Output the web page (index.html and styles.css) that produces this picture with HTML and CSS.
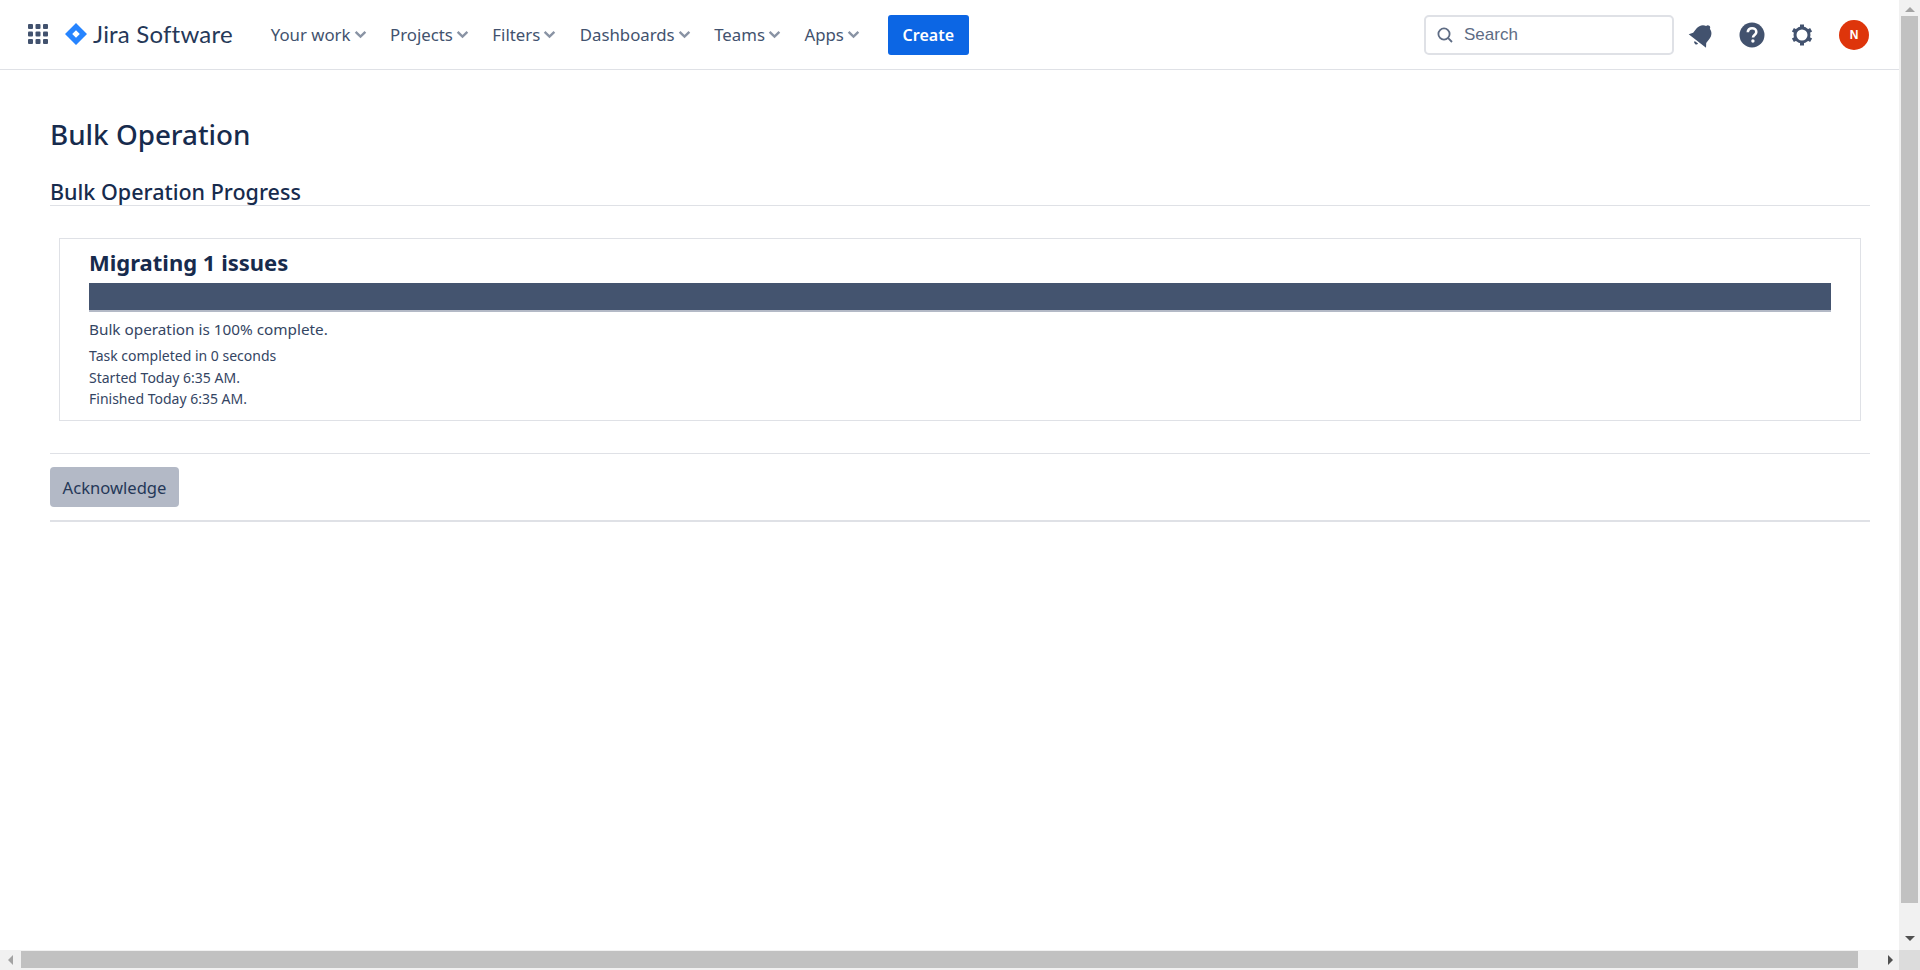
FILE: index.html
```html
<!DOCTYPE html>
<html lang="en">
<head>
<meta charset="utf-8">
<title>Bulk Operation</title>
<link rel="stylesheet" href="styles.css">
</head>
<body>
<div class="shell">
  <div class="viewport">
    <header class="topbar">
      <svg class="apps" width="22" height="22" viewBox="0 0 22 22" fill="#42526e">
        <rect x="1" y="1" width="5" height="5" rx="1"/><rect x="8.5" y="1" width="5" height="5" rx="1"/><rect x="16" y="1" width="5" height="5" rx="1"/>
        <rect x="1" y="8.5" width="5" height="5" rx="1"/><rect x="8.5" y="8.5" width="5" height="5" rx="1"/><rect x="16" y="8.5" width="5" height="5" rx="1"/>
        <rect x="1" y="16" width="5" height="5" rx="1"/><rect x="8.5" y="16" width="5" height="5" rx="1"/><rect x="16" y="16" width="5" height="5" rx="1"/>
      </svg>
      <svg class="logo-mark" width="22" height="22" viewBox="0 0 22 22">
        <path fill="#2684ff" d="M11 0 L22 11 L11 22 L0 11 Z M11 7.2 L7.2 11 L11 14.8 L14.8 11 Z" fill-rule="evenodd"/>
      </svg>
      <span class="logo-text">Jira Software</span>
      <nav class="nav">
        <a class="nav-item">Your work<svg class="chev" viewBox="0 0 12 8"><path d="M1.5 1.5 L6 6 L10.5 1.5"/></svg></a>
        <a class="nav-item">Projects<svg class="chev" viewBox="0 0 12 8"><path d="M1.5 1.5 L6 6 L10.5 1.5"/></svg></a>
        <a class="nav-item">Filters<svg class="chev" viewBox="0 0 12 8"><path d="M1.5 1.5 L6 6 L10.5 1.5"/></svg></a>
        <a class="nav-item">Dashboards<svg class="chev" viewBox="0 0 12 8"><path d="M1.5 1.5 L6 6 L10.5 1.5"/></svg></a>
        <a class="nav-item">Teams<svg class="chev" viewBox="0 0 12 8"><path d="M1.5 1.5 L6 6 L10.5 1.5"/></svg></a>
        <a class="nav-item">Apps<svg class="chev" viewBox="0 0 12 8"><path d="M1.5 1.5 L6 6 L10.5 1.5"/></svg></a>
      </nav>
      <button class="create">Create</button>
      <div class="search">
        <svg width="18" height="18" viewBox="0 0 18 18" fill="none" stroke="#5e6c84" stroke-width="1.8"><circle cx="8" cy="8" r="5.6"/><path d="M12.2 12.2 L16 16"/></svg>
        <span>Search</span>
      </div>
      <svg class="tool bell" width="28" height="28" viewBox="0 0 26 26" fill="#42526e">
        <g transform="rotate(38 13 13)"><path d="M13 2c1 0 2 .6 2.200 2c3.500 .9 5.500 4 5.500 7.500v5l2.500 3.500H2.800l2.500-3.500v-5c0-3.500 2-6.600 5.500-7.500c.2-1.400 1.200-2 2.200-2z"/><path d="M11 21.500h4a2 2 0 0 1-4 0z"/></g>
      </svg>
      <svg class="tool help" width="26" height="26" viewBox="0 0 26 26">
        <circle cx="13" cy="13" r="12.5" fill="#42526e"/>
        <path d="M8.8 10.3c0-2.5 1.9-4.1 4.3-4.1s4.2 1.5 4.2 3.7c0 3-3.3 3.1-3.3 5.6" fill="none" stroke="#fff" stroke-width="2.6"/>
        <circle cx="13.9" cy="19" r="1.7" fill="#fff"/>
      </svg>
      <svg class="tool gear" width="24" height="24" viewBox="0 0 24 24" fill="none" stroke="#42526e">
        <circle cx="12" cy="12" r="7" stroke-width="3"/>
        <path stroke-width="4" d="M12 1.500v3M12 19.500v3M2.900 6.800l2.600 1.500M18.500 15.700l2.600 1.500M2.900 17.200l2.600-1.500M18.500 8.300l2.600-1.500"/>
      </svg>
      <span class="avatar">N</span>
    </header>
    <main class="page">
      <h1 class="title">Bulk Operation</h1>
      <h2 class="subtitle">Bulk Operation Progress</h2>
      <section class="panel">
        <h3 class="panel-title">Migrating 1 issues</h3>
        <div class="bar"></div>
        <p class="status">Bulk operation is 100% complete.</p>
        <p class="detail">Task completed in 0 seconds</p>
        <p class="detail">Started Today 6:35 AM.</p>
        <p class="detail">Finished Today 6:35 AM.</p>
      </section>
      <div class="actions">
        <button class="ack">Acknowledge</button>
      </div>
    </main>
  </div>
  <div class="vscroll">
    <span class="arrow arrow-up"></span>
    <div class="vtrack"><div class="vthumb"></div></div>
    <span class="arrow arrow-down"></span>
  </div>
  <div class="hscroll">
    <span class="arrow arrow-left"></span>
    <div class="htrack"><div class="hthumb"></div></div>
    <span class="arrow arrow-right"></span>
  </div>
  <div class="corner"></div>
</div>
</body>
</html>
```
FILE: styles.css
```css
* { box-sizing: border-box; }
html, body { margin: 0; height: 100%; overflow: hidden; background: #fff; }
body { font-family: "Noto Sans", "Open Sans", sans-serif; color: #172b4d; }
.shell {
  display: grid;
  grid-template-columns: 1899px 21px;
  grid-template-rows: 950px 20px;
  width: 1920px;
  height: 970px;
}
.viewport { overflow: hidden; background: #fff; }

.topbar {
  display: flex;
  align-items: center;
  height: 70px;
  padding: 0 0 0 27px;
  border-bottom: 1px solid #dfe1e6;
}
.apps { flex: none; margin-bottom: 2px; }
.logo-mark { flex: none; margin-left: 16px; margin-bottom: 2px; }
.logo-text {
  margin-left: 6px;
  margin-bottom: 2px;
  font-family: Lato, sans-serif;
  font-size: 24px;
  letter-spacing: 0.2px;
  color: #253858;
}
.nav { display: flex; align-items: center; margin-left: 38px; gap: 23.5px; }
.nav-item {
  display: flex;
  align-items: center;
  gap: 3px;
  font-size: 16.8px;
  color: #42526e;
}
.chev { width: 13px; height: 9px; fill: none; stroke: #8993a4; stroke-width: 2.2; }
.create {
  width: 81px;
  height: 40px;
  margin-left: 28px;
  padding: 0;
  border: 0;
  border-radius: 3px;
  background: #0c66e4;
  color: #fff;
  font: 600 16px "Noto Sans", sans-serif;
}
.search {
  display: flex;
  align-items: center;
  gap: 10px;
  width: 250px;
  height: 40px;
  margin-left: auto;
  padding-left: 10px;
  border: 2px solid #dfe1e6;
  border-radius: 5px;
  font: 17px "Liberation Sans", sans-serif;
  color: #5e6c84;
}
.tool { flex: none; }
.bell { margin-left: 14px; }
.help { margin-left: 23px; }
.gear { margin-left: 25px; }
.avatar {
  flex: none;
  display: flex;
  align-items: center;
  justify-content: center;
  width: 30px;
  height: 30px;
  margin: 0 30px 0 25px;
  border-radius: 50%;
  background: #de350b;
  color: #fff;
  font: 700 12px "Liberation Sans", sans-serif;
}

.page { padding: 0 29px 0 50px; }
.title {
  margin: 0;
  padding-top: 44px;
  font-size: 27.8px;
  line-height: 40px;
  font-weight: 500;
  color: #172b4d;
}
.subtitle {
  margin: 16px 0 0;
  height: 36px;
  border-bottom: 1px solid #dfe1e6;
  font-size: 21.5px;
  line-height: 44px;
  font-weight: 500;
}
.panel {
  margin: 32px 9px 0;
  height: 183px;
  padding: 7px 29px 0;
  border: 1px solid #dfe1e6;
}
.panel-title {
  margin: 0;
  font-size: 22px;
  line-height: 32px;
  font-weight: 700;
}
.bar {
  height: 29px;
  margin-top: 5px;
  background: #44546f;
  border-bottom: 2px solid #b3b9c6;
}
.status { margin: 7px 0 5px; font-size: 15.3px; line-height: 21px; color: #344563; }
.detail { margin: 0; font-size: 14px; line-height: 21.5px; color: #344563; }
.actions {
  margin-top: 32px;
  padding: 13px 0 13px;
  border-top: 1px solid #dfe1e6;
  border-bottom: 2px solid #dfe1e6;
}
.ack {
  display: block;
  width: 129px;
  height: 40px;
  padding: 0;
  border: 0;
  border-radius: 4px;
  background: #b3b9c6;
  color: #253858;
  font: 16.6px "Noto Sans", sans-serif;
}

.vscroll {
  display: flex;
  flex-direction: column;
  align-items: center;
  background: #f1f1f1;
}
.vtrack { flex: 1; width: 100%; padding-left: 2px; padding-right: 2px; }
.vthumb { height: 887px; background: #c1c1c1; }
.hscroll {
  display: flex;
  align-items: center;
  background: #f1f1f1;
}
.htrack { flex: 1; height: 100%; padding: 1px 0 2px; }
.hthumb { width: 1837px; height: 100%; background: #c1c1c1; }
.corner { background: #dcdcdc; }
.arrow { flex: none; display: block; width: 0; height: 0; border-style: solid; border-color: transparent; }
.arrow-up { margin: 7px 0 4px; border-width: 0 5px 5px; border-bottom-color: #a3a3a3; }
.arrow-down { margin: 4px 0 9px; border-width: 5px 5px 0; border-top-color: #505050; }
.arrow-left { margin: 0 8px 0 8px; border-width: 5px 5px 5px 0; border-right-color: #a3a3a3; }
.arrow-right { margin: 0 6px 0 29px; border-width: 5px 0 5px 5px; border-left-color: #505050; }
```
